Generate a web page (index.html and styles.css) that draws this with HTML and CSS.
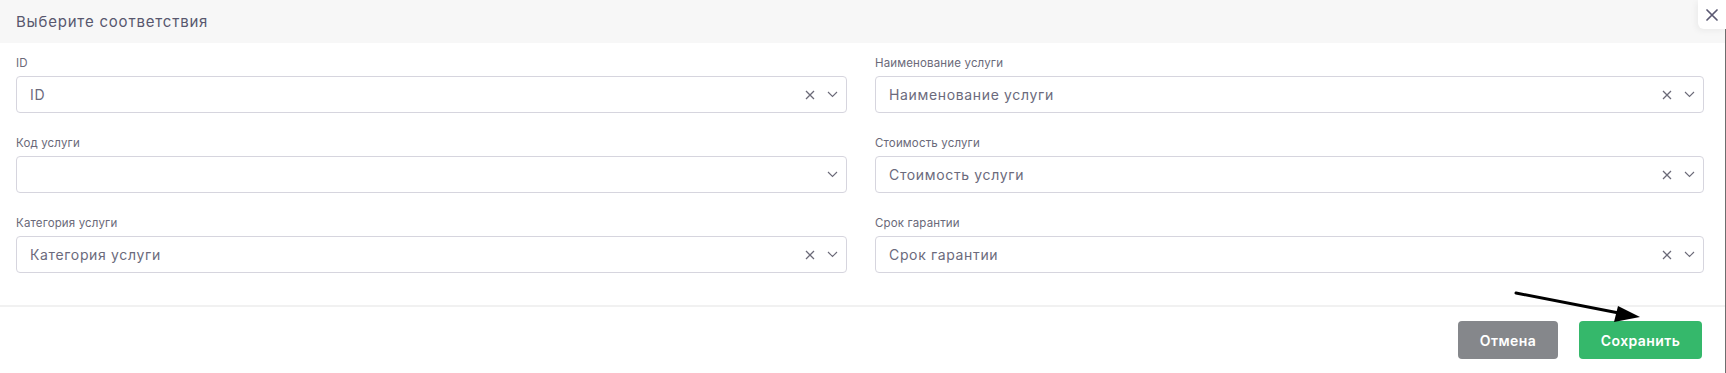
FILE: index.html
```html
<!DOCTYPE html>
<html lang="ru">
<head>
<meta charset="utf-8">
<title>Выберите соответствия</title>
<link rel="stylesheet" href="styles.css">
</head>
<body>
<div class="modal">
  <div class="modal-header">
    <h2 class="modal-title">Выберите соответствия</h2>
  </div>
  <button class="modal-close" aria-label="close">
    <svg width="12" height="12" viewBox="0 0 12 12"><path d="M1 1L11 11M11 1L1 11" stroke="#5b5972" stroke-width="1.7" stroke-linecap="round"/></svg>
  </button>
  <div class="modal-body">
    <div class="field">
      <label class="field-label">ID</label>
      <div class="select">
        <span class="select-value">ID</span>
        <span class="select-icons">
          <svg class="ic-clear" width="10" height="10" viewBox="0 0 10 10"><path d="M1 1L9 9M9 1L1 9" stroke="#6b6a78" stroke-width="1.3"/></svg>
          <svg class="ic-chev" width="11" height="7" viewBox="0 0 11 7"><path d="M1 1L5.5 5.5L10 1" fill="none" stroke="#6b6a78" stroke-width="1.1"/></svg>
        </span>
      </div>
    </div>
    <div class="field">
      <label class="field-label">Наименование услуги</label>
      <div class="select">
        <span class="select-value">Наименование услуги</span>
        <span class="select-icons">
          <svg class="ic-clear" width="10" height="10" viewBox="0 0 10 10"><path d="M1 1L9 9M9 1L1 9" stroke="#6b6a78" stroke-width="1.3"/></svg>
          <svg class="ic-chev" width="11" height="7" viewBox="0 0 11 7"><path d="M1 1L5.5 5.5L10 1" fill="none" stroke="#6b6a78" stroke-width="1.1"/></svg>
        </span>
      </div>
    </div>
    <div class="field">
      <label class="field-label">Код услуги</label>
      <div class="select">
        <span class="select-value"></span>
        <span class="select-icons">
          <svg class="ic-chev" width="11" height="7" viewBox="0 0 11 7"><path d="M1 1L5.5 5.5L10 1" fill="none" stroke="#6b6a78" stroke-width="1.1"/></svg>
        </span>
      </div>
    </div>
    <div class="field">
      <label class="field-label">Стоимость услуги</label>
      <div class="select">
        <span class="select-value">Стоимость услуги</span>
        <span class="select-icons">
          <svg class="ic-clear" width="10" height="10" viewBox="0 0 10 10"><path d="M1 1L9 9M9 1L1 9" stroke="#6b6a78" stroke-width="1.3"/></svg>
          <svg class="ic-chev" width="11" height="7" viewBox="0 0 11 7"><path d="M1 1L5.5 5.5L10 1" fill="none" stroke="#6b6a78" stroke-width="1.1"/></svg>
        </span>
      </div>
    </div>
    <div class="field">
      <label class="field-label">Категория услуги</label>
      <div class="select">
        <span class="select-value">Категория услуги</span>
        <span class="select-icons">
          <svg class="ic-clear" width="10" height="10" viewBox="0 0 10 10"><path d="M1 1L9 9M9 1L1 9" stroke="#6b6a78" stroke-width="1.3"/></svg>
          <svg class="ic-chev" width="11" height="7" viewBox="0 0 11 7"><path d="M1 1L5.5 5.5L10 1" fill="none" stroke="#6b6a78" stroke-width="1.1"/></svg>
        </span>
      </div>
    </div>
    <div class="field">
      <label class="field-label">Срок гарантии</label>
      <div class="select">
        <span class="select-value">Срок гарантии</span>
        <span class="select-icons">
          <svg class="ic-clear" width="10" height="10" viewBox="0 0 10 10"><path d="M1 1L9 9M9 1L1 9" stroke="#6b6a78" stroke-width="1.3"/></svg>
          <svg class="ic-chev" width="11" height="7" viewBox="0 0 11 7"><path d="M1 1L5.5 5.5L10 1" fill="none" stroke="#6b6a78" stroke-width="1.1"/></svg>
        </span>
      </div>
    </div>
  </div>
  <div class="modal-footer">
    <button class="btn btn-cancel">Отмена</button>
    <button class="btn btn-save">Сохранить</button>
  </div>
  <svg class="arrow" width="140" height="40" viewBox="0 0 140 40">
    <line x1="2" y1="2" x2="110" y2="23" stroke="#000" stroke-width="3" stroke-linecap="round"/>
    <polygon points="126,26 104,15 100,31" fill="#000"/>
  </svg>
</div>
</body>
</html>
```

FILE: styles.css
```css
* { box-sizing: border-box; }
html, body { margin: 0; padding: 0; background: #fff; }
body {
  font-family: Inter, "Open Sans", "Noto Sans", sans-serif;
  color: #5b5a6e;
}
.modal {
  position: relative;
  width: 1726px;
  height: 373px;
  border-right: 1px solid #6e6e6e;
  background: #fff;
}
.modal-header {
  height: 43px;
  background: #f7f7f7;
  display: flex;
  align-items: center;
  padding-left: 16px;
}
.modal-title {
  margin: 0;
  font-size: 15px;
  font-weight: 400;
  color: #58576e;
  letter-spacing: 0.8px;
}
.modal-close {
  position: absolute;
  top: 0;
  right: -1px;
  width: 28px;
  height: 29px;
  border: none;
  background: #fff;
  border-bottom-left-radius: 6px;
  box-shadow: -2px 2px 6px rgba(0,0,0,0.05);
  display: flex;
  align-items: center;
  justify-content: center;
  padding: 0;
}
.modal-body {
  display: grid;
  grid-template-columns: 831px 829px;
  column-gap: 28px;
  row-gap: 22px;
  padding: 12px 21px 32px 16px;
  border-bottom: 2px solid #f1f1f1;
}
.field { display: flex; flex-direction: column; }
.field-label {
  font-size: 11.5px;
  line-height: 16px;
  color: #6a6979;
  margin-bottom: 5px;
  letter-spacing: 0.15px;
}
.select {
  height: 37px;
  border: 1px solid #d6d5de;
  border-radius: 4px;
  display: flex;
  align-items: center;
  padding: 0 8px 0 13px;
}
.select-value {
  flex: 1;
  font-size: 14px;
  color: #6b6a7c;
  letter-spacing: 0.65px;
}
.select-icons {
  display: flex;
  align-items: center;
  gap: 12px;
}
.modal-footer {
  display: flex;
  justify-content: flex-end;
  gap: 21px;
  padding: 14px 23px 0 0;
}
.btn {
  height: 38px;
  border: none;
  border-radius: 4px;
  color: #fff;
  font-family: Inter, "Open Sans", sans-serif;
  font-size: 14px;
  font-weight: 600;
  letter-spacing: 0.4px;
  padding: 0;
}
.btn-cancel { width: 100px; background: #85878b; }
.btn-save { width: 123px; background: #35b86b; }
.arrow {
  position: absolute;
  left: 1514px;
  top: 291px;
}
```
